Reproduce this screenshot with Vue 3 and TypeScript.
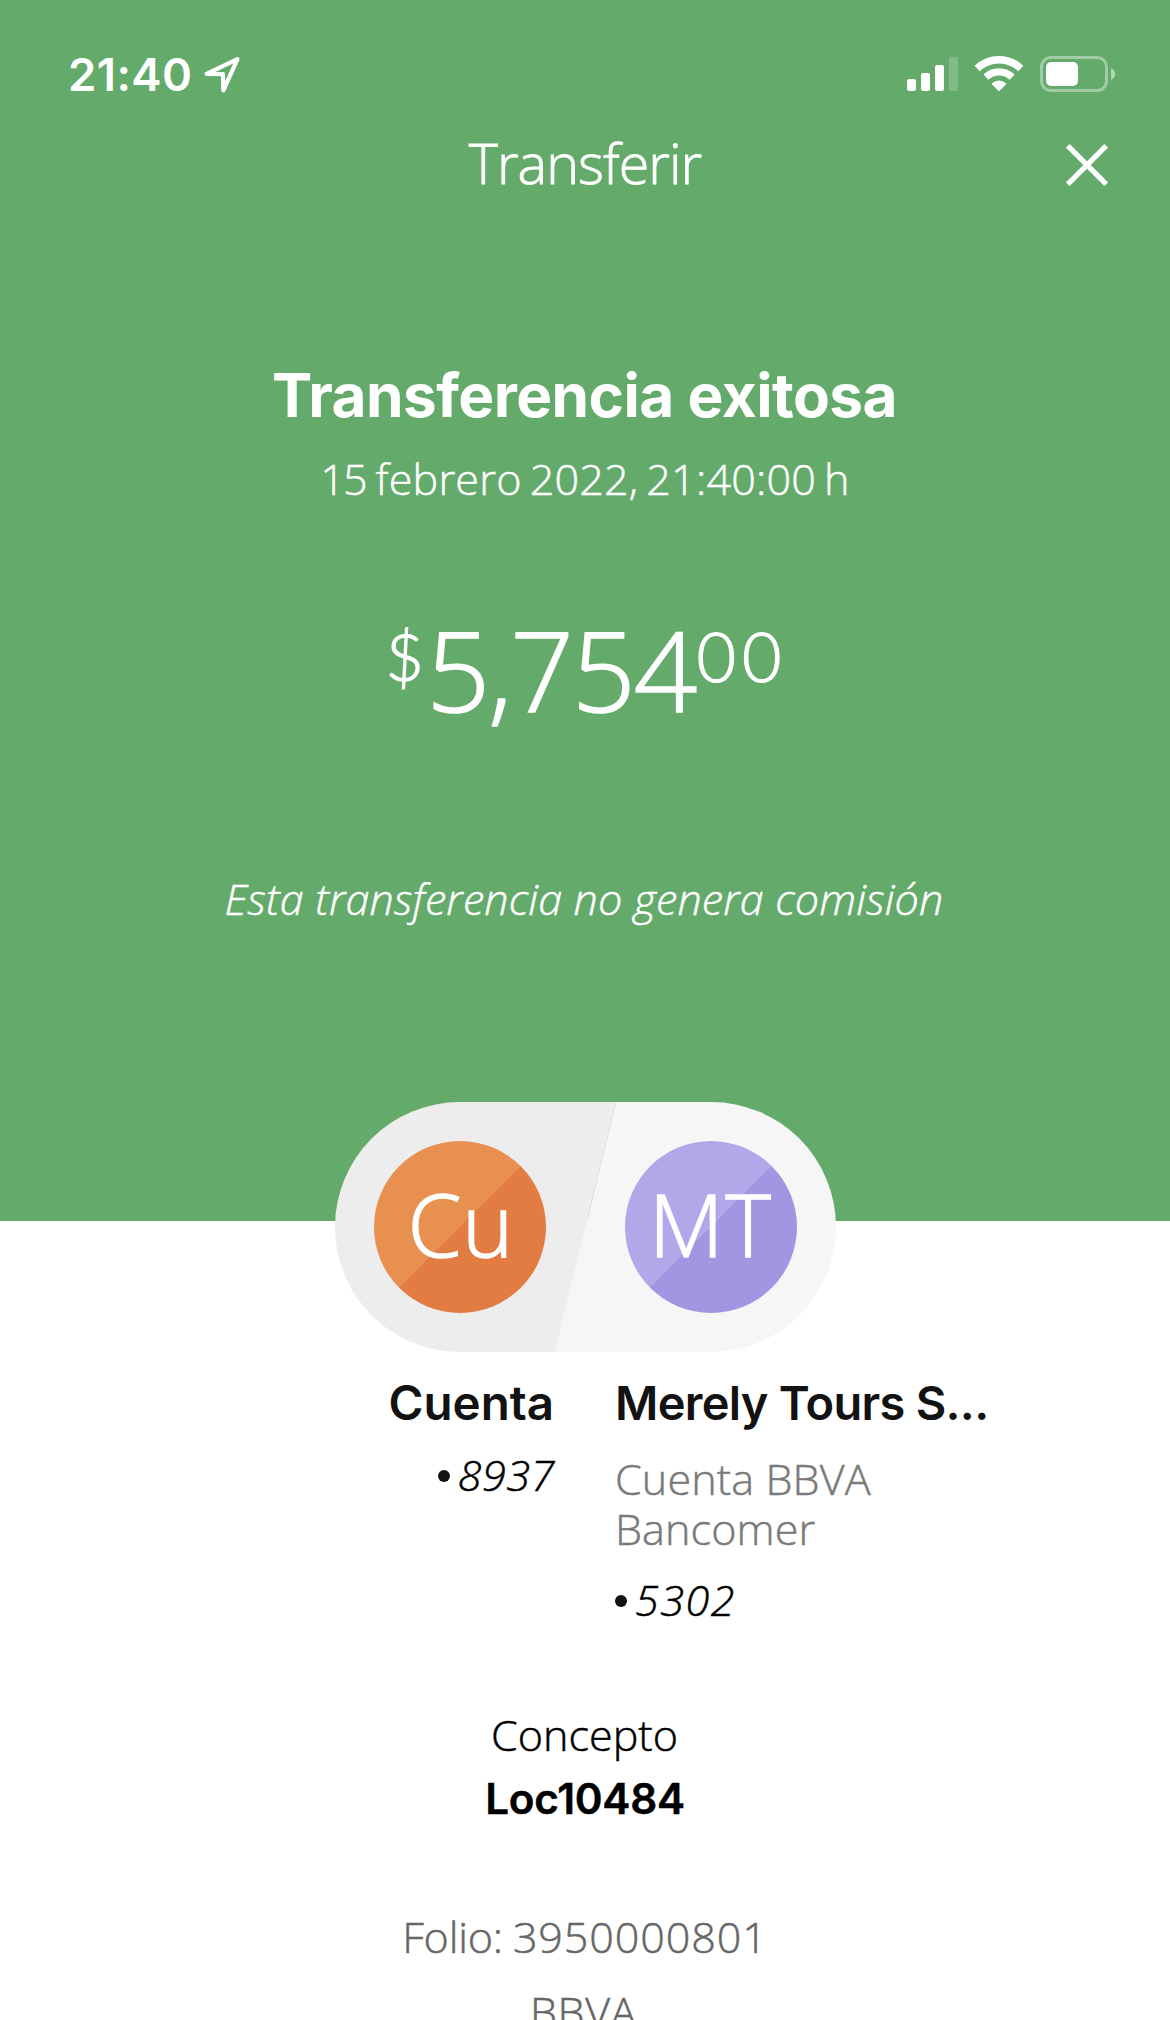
<script setup lang="ts">
interface Account {
  initials: string
  name: string
  detail?: string
  digits: string
  theme: 'orange' | 'purple'
}

const origin: Account = { initials: 'Cu', name: 'Cuenta', digits: '8937', theme: 'orange' }
const target: Account = {
  initials: 'MT',
  name: 'Merely Tours S...',
  detail: 'Cuenta BBVA Bancomer',
  digits: '5302',
  theme: 'purple',
}
</script>

<template>
  <main class="screen">
    <section class="hero">
      <div class="status">
        <span class="time">21:40</span>
        <svg class="location" width="38" height="38" viewBox="0 0 38 38">
          <path d="M3.6 17.9 L34.4 3.2 L20.4 34.4 L20 18.2 Z" fill="none" stroke="#fff" stroke-width="4.2" stroke-linejoin="round" />
        </svg>
        <svg class="indicators" width="210" height="40" viewBox="0 0 210 40">
          <g fill="#fff">
            <rect x="0" y="24" width="9" height="12" rx="2.2" />
            <rect x="14" y="18" width="9" height="18" rx="2.2" />
            <rect x="28" y="10" width="9" height="26" rx="2.2" />
            <rect x="42" y="2" width="9" height="34" rx="2.2" opacity=".2" />
            <path d="M92 25.4 Q96 25.4 99 28.2 Q99.4 28.8 98.9 29.4 L92.6 35.7 Q92 36.3 91.4 35.7 L85.1 29.4 Q84.6 28.8 85 28.2 Q88 25.4 92 25.4 Z" />
          </g>
          <g fill="none" stroke="#fff">
            <path d="M70.2 13.5 A31.5 31.5 0 0 1 113.8 13.5" stroke-width="7.4" />
            <path d="M78.9 22.2 A19 19 0 0 1 105.1 22.2" stroke-width="7.2" />
          </g>
          <rect x="134.5" y="2.5" width="65" height="33" rx="9.5" fill="none" stroke="#fff" stroke-width="3" opacity=".4" />
          <rect x="139" y="7" width="32" height="24" rx="5" fill="#fff" />
          <path d="M204 13.2 Q208.2 15 208.2 19 Q208.2 23 204 24.8 Z" fill="#fff" opacity=".5" />
        </svg>
      </div>

      <header class="bar">
        <span class="bar-title">Transferir</span>
        <svg class="close" width="42" height="42" viewBox="0 0 42 42">
          <path d="M1.8 1.8 L40.2 40.2 M40.2 1.8 L1.8 40.2" stroke="#fff" stroke-width="5.2" />
        </svg>
      </header>

      <h1>Transferencia exitosa</h1>
      <p class="date"><span class="day">15</span> febrero 2022, 21:40:00 h</p>
      <div class="amount">
        <span class="small sign">$</span><span class="big">5,754</span><span class="small cents">00</span>
      </div>
      <p class="note">Esta transferencia no genera comisión</p>
    </section>

    <div class="capsule">
      <svg class="halves" width="501" height="250" viewBox="0 0 501 250">
        <path d="M125 0 H281 L220 250 H125 A125 125 0 0 1 125 0 Z" fill="#ededed" />
        <path d="M281 0 H376 A125 125 0 0 1 376 250 H220 Z" fill="#f6f6f6" />
      </svg>
      <div v-for="a in [origin, target]" :key="a.digits" class="avatar" :class="a.theme">
        <span>{{ a.initials }}</span>
      </div>
    </div>

    <section class="accounts">
      <div class="account from">
        <h2>{{ origin.name }}</h2>
        <p class="digits"><i class="dot"></i>{{ origin.digits }}</p>
      </div>
      <div class="account to">
        <h2>{{ target.name }}</h2>
        <p class="detail">{{ target.detail }}</p>
        <p class="digits"><i class="dot"></i>{{ target.digits }}</p>
      </div>
    </section>

    <section class="info">
      <p class="label">Concepto</p>
      <p class="value">Loc10484</p>
      <p class="folio">Folio: <span class="number">3950000801</span></p>
      <p class="bank">BBVA</p>
    </section>
  </main>
</template>

<style>
body {
  margin: 0;
  background: #fff;
}
</style>

<style scoped>
.screen {
  width: 1170px;
  height: 2020px;
  overflow: hidden;
  background: #fff;
  font-family: 'Open Sans', 'Noto Sans', sans-serif;
  font-weight: 300;
  font-size: 43.1px;
  line-height: 50px;
  -webkit-text-stroke-width: 0.5px;
}
p, h1, h2 {
  margin: 0;
}
.hero {
  height: 1221px;
  overflow: hidden;
  background: #64aa6b;
  color: #fff;
  text-align: center;
}
.status {
  display: flex;
  height: 82px;
  padding: 44px 53px 0 68px;
}
.time {
  width: 135px;
  padding-top: 1px;
  text-align: left;
  font: 600 45.5px/60px Inter, sans-serif;
  letter-spacing: 0.4px;
  -webkit-text-stroke-width: 0;
}
.location {
  margin-top: 12px;
}
.indicators {
  margin: 11px 0 0 auto;
}
.bar {
  display: grid;
  grid-template-columns: 1fr auto 1fr;
  height: 70px;
}
.bar-title {
  grid-column: 2;
  padding-top: 2px;
  font-size: 55.6px;
  line-height: 70px;
  letter-spacing: -0.95px;
  -webkit-text-stroke-width: 0.8px;
}
.close {
  justify-self: end;
  margin: 18px 62px 0 0;
}
h1 {
  margin-top: 165px;
  padding-right: 1px;
  font: 700 60.3px/70px Inter, sans-serif;
  letter-spacing: -0.54px;
  -webkit-text-stroke-width: 0;
}
.date {
  margin-top: 23px;
  word-spacing: -3.4px;
  letter-spacing: 0.2px;
}
.day {
  margin-right: 2px;
  letter-spacing: -2px;
}
.amount {
  display: flex;
  height: 120px;
  margin: 105px 0 0 385px;
}
.big {
  margin-left: 2px;
  font-size: 111.3px;
  line-height: 120px;
  letter-spacing: -1.8px;
  -webkit-text-stroke-width: 1.6px;
}
.small {
  margin-top: 12px;
  font-family: Lato, sans-serif;
  font-size: 68.2px;
  line-height: 70px;
  -webkit-text-stroke-width: 1.2px;
}
.sign {
  width: 39.5px;
  font-size: 66px;
}
.cents {
  margin-left: 1px;
  letter-spacing: 6px;
}
.note {
  margin-top: 145px;
  padding-right: 2px;
  font-style: italic;
  letter-spacing: 0.14px;
}
.capsule {
  position: relative;
  display: flex;
  justify-content: space-between;
  box-sizing: border-box;
  width: 501px;
  height: 250px;
  margin: -119px 0 0 335px;
  padding: 39px 39px 0;
}
.halves {
  position: absolute;
  inset: 0;
}
.avatar {
  position: relative;
  width: 172px;
  height: 172px;
  border-radius: 50%;
  color: #fff;
  text-align: center;
  font-size: 86.3px;
  line-height: 166px;
  -webkit-text-stroke-width: 1.5px;
}
.orange {
  background: linear-gradient(135deg, #e8904f 50%, #e37c42 50%);
}
.purple {
  background: linear-gradient(135deg, #b1a8e9 50%, #a296e2 50%);
}
.orange span {
  padding-left: 2px;
  letter-spacing: 1px;
}
.purple span {
  letter-spacing: 2px;
}
.accounts {
  display: flex;
  gap: 62px;
  height: 336px;
  padding-top: 21px;
}
.account {
  display: flex;
  flex-direction: column;
}
.from {
  width: 554px;
  align-items: flex-end;
}
.to {
  width: 420px;
}
h2 {
  color: #121212;
  font: 600 47.5px/60px Inter, sans-serif;
  white-space: nowrap;
  -webkit-text-stroke-width: 0;
}
.to h2 {
  margin-left: -1px;
  font-size: 47px;
  letter-spacing: -0.7px;
}
.digits {
  display: flex;
  align-items: center;
  color: #000;
  font-style: italic;
  letter-spacing: 0.6px;
}
.from .digits {
  margin: 17px -1px 0 0;
}
.to .digits {
  margin: 21px 0 0 -1px;
  letter-spacing: 1.5px;
}
.dot {
  width: 12px;
  height: 12px;
  margin: 2px 8px 0 0;
  border-radius: 50%;
  background: #121212;
}
.detail {
  width: 300px;
  margin: 21px 0 0 -1px;
  color: #7a7a7a;
  letter-spacing: 0.1px;
}
.info {
  color: #000;
  text-align: center;
}
.label {
  padding: 1px 1px 0 0;
}
.value {
  margin-top: 14px;
  font: 600 42.2px/50px Inter, sans-serif;
  letter-spacing: -0.26px;
}
.folio {
  margin-top: 88px;
  color: #666;
  letter-spacing: -0.2px;
  word-spacing: -1px;
}
.number {
  letter-spacing: 0.9px;
}
.bank {
  margin-top: 25px;
  padding-right: 3px;
  color: #666;
  letter-spacing: 0.5px;
}
</style>
